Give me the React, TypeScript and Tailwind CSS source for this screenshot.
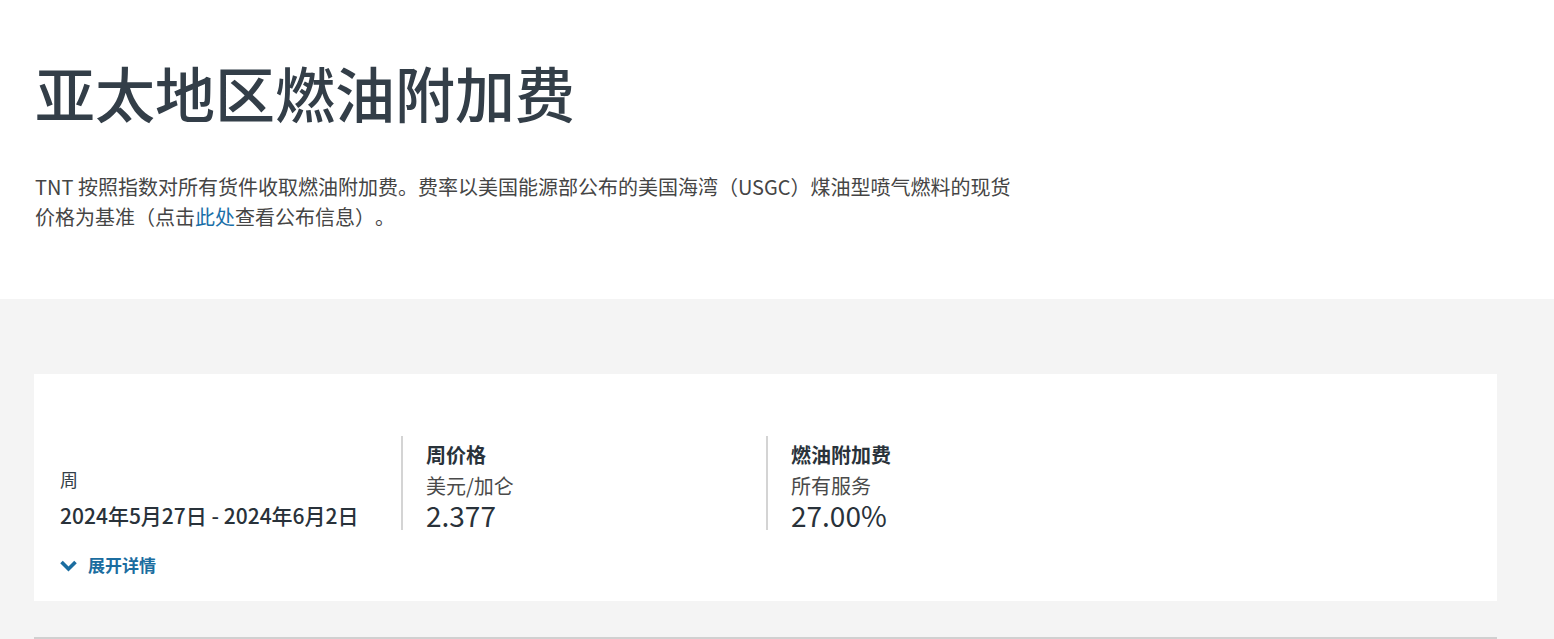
import React from "react";

const font = { fontFamily: '"Noto Sans CJK SC", "Noto Sans", sans-serif' };

const App = () => {
  return (
    <div style={font} className="min-h-[639px] bg-[#f4f4f4]">
      {/* top intro */}
      <div className="bg-white h-[299px] px-[35px] pt-[52px]">
        <h1 className="text-[60px] leading-[80px] font-medium text-[#333e48]">亚太地区燃油附加费</h1>
        <p className="mt-[40px] w-[985px] text-[20px] leading-[30px] text-[#454545] [text-spacing-trim:space-all]">
          TNT 按照指数对所有货件收取燃油附加费。费率以美国能源部公布的美国海湾（USGC）煤油型喷气燃料的现货价格为基准（点击
          <a href="#" className="text-[#1a6fa8]">此处</a>
          查看公布信息）。
        </p>
      </div>

      {/* rates */}
      <div className="pt-[75px] pl-[34px] pr-[57px]">
        <div className="bg-white h-[227px] pt-[62px] pl-[26px]">
          <div className="flex">
            <div className="w-[341px] h-[94px] flex flex-col justify-end">
              <div className="text-[18px] leading-[26px] text-[#333e48]">周</div>
              <div className="mt-[8px] text-[21px] leading-[30px] font-medium text-[#29323a]">2024年5月27日 - 2024年6月2日</div>
            </div>
            <div className="w-[365px] h-[94px] border-l-2 border-[#d4d4d4] pl-[23px]">
              <div className="text-[20px] leading-[26px] font-bold text-[#29323a] mt-[6px]">周价格</div>
              <div className="text-[20px] leading-[26px] text-[#4a4a4a] mt-[5px]">美元/加仑</div>
              <div className="text-[28px] leading-[32px] text-[#29323a]">2.377</div>
            </div>
            <div className="w-[365px] h-[94px] border-l-2 border-[#d4d4d4] pl-[23px]">
              <div className="text-[20px] leading-[26px] font-bold text-[#29323a] mt-[6px]">燃油附加费</div>
              <div className="text-[20px] leading-[26px] text-[#4a4a4a] mt-[5px]">所有服务</div>
              <div className="text-[28px] leading-[32px] text-[#29323a]">27.00%</div>
            </div>
          </div>
          <button className="mt-[22px] flex items-center gap-[11px] text-[#1b6da0] text-[17px] leading-[26px] font-bold">
            <svg width="17" height="12" viewBox="0 0 17 12" fill="none" className="mt-[2px]">
              <path d="M1.5 2l7 7 7-7" stroke="#1b6da0" strokeWidth="3.6" />
            </svg>
            展开详情
          </button>
        </div>
        <div className="mt-[36px] h-[2px] bg-[#d0d0d0]" />
      </div>
    </div>
  );
};

export default App;
